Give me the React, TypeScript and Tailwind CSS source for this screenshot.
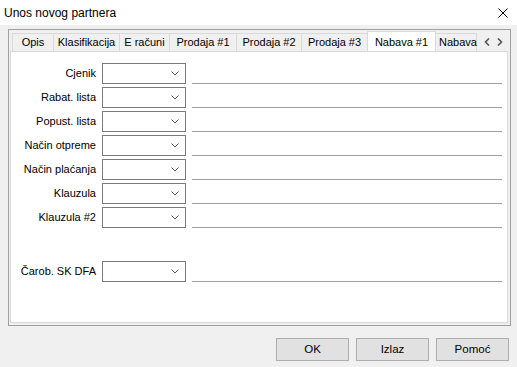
import { ReactNode } from 'react';

const tabs = [
  { label: 'Opis', w: 'w-[42px]' },
  { label: 'Klasifikacija', w: 'w-[67px]' },
  { label: 'E računi', w: 'w-[51px]' },
  { label: 'Prodaja #1', w: 'w-[68px]' },
  { label: 'Prodaja #2', w: 'w-[66px]' },
  { label: 'Prodaja #3', w: 'w-[67px]' },
];

const rows = ['Cjenik', 'Rabat. lista', 'Popust. lista', 'Način otpreme', 'Način plaćanja', 'Klauzula', 'Klauzula #2'];

function Chevron() {
  return (
    <svg width="8" height="5" viewBox="0 0 8 5" className="block">
      <path d="M0.5 0.5 L4 4 L7.5 0.5" fill="none" stroke="#606060" strokeWidth="1" />
    </svg>
  );
}

function Row({ label, className = '' }: { label: string; className?: string }) {
  return (
    <div className={`flex items-start ${className}`}>
      <div className="w-[85px] h-[21px] flex items-center justify-end text-black whitespace-nowrap">{label}</div>
      <div className="ml-[6px] w-[84px] h-[21px] border border-[#7a7a7a] bg-white flex items-center justify-end pr-[6px]">
        <Chevron />
      </div>
      <div className="ml-[6px] w-[310px] h-[21px] border-b border-[#a0a0a0]" />
    </div>
  );
}

function Button({ children }: { children: ReactNode }) {
  return (
    <div className="w-[73px] h-[23px] border border-[#adadad] bg-[#e1e1e1] flex items-center justify-center text-black text-[11.5px]">
      {children}
    </div>
  );
}

export default function App() {
  return (
    <div className="w-[517px] h-[367px] bg-[#f0f0f0] text-[11px] leading-none overflow-hidden" style={{ fontFamily: '"Liberation Sans", Arial, sans-serif' }}>
      <div className="h-[25px] bg-white flex items-center justify-between pl-[4px] pr-[9px]">
        <span className="text-black text-[12px]">Unos novog partnera</span>
        <svg width="10" height="10" viewBox="0 0 10 10" className="block">
          <path d="M0.5 0.5 L9.5 9.5 M9.5 0.5 L0.5 9.5" stroke="#000" strokeWidth="1" />
        </svg>
      </div>

      <div className="ml-[8px] mt-[4px] w-[503px] h-[297px] border border-[#a0a0a0] flex flex-col">
        {/* tab strip */}
        <div className="relative h-[21px] flex items-end pl-[3px] overflow-hidden whitespace-nowrap">
          {tabs.map((t, i) => (
            <div key={t.label} className={`${t.w} ${i ? '-ml-px' : ''} h-[18px] border border-b-0 border-[#d9d9d9] bg-[#f0f0f0] flex items-center justify-center shrink-0`}>
              {t.label}
            </div>
          ))}
          <div className="-ml-px w-[69px] h-[21px] border border-b-0 border-[#d9d9d9] bg-white flex items-start justify-center pt-[5px] shrink-0 relative z-10 translate-y-px">
            Nabava #1
          </div>
          <div className="-ml-px w-[42px] h-[18px] border border-b-0 border-[#d9d9d9] bg-[#f0f0f0] flex items-center pl-[3px] shrink-0">
            Nabava
          </div>
          <div className="absolute right-0 top-0 w-[31px] h-[21px] bg-[#f0f0f0] flex items-center justify-between pl-[5px] pr-[7px] pt-[2px]">
            <svg width="6" height="8" viewBox="0 0 6 8"><path d="M5 0.5 L1.5 4 L5 7.5" fill="none" stroke="#555" strokeWidth="1.6" /></svg>
            <svg width="6" height="8" viewBox="0 0 6 8"><path d="M1 0.5 L4.5 4 L1 7.5" fill="none" stroke="#555" strokeWidth="1.6" /></svg>
          </div>
        </div>

        {/* tab sheet */}
        <div className="ml-px mr-[2px] mb-[2px] flex-1 border border-[#d9d9d9] bg-white pt-[11px] flex flex-col gap-[3px]">
          {rows.map((r) => (
            <Row key={r} label={r} />
          ))}
          <Row label="Čarob. SK DFA" className="mt-[30px]" />
        </div>
      </div>

      <div className="mt-[12px] flex justify-end gap-[7px] pr-[8px]">
        <Button>OK</Button>
        <Button>Izlaz</Button>
        <Button>Pomoć</Button>
      </div>
    </div>
  );
}
